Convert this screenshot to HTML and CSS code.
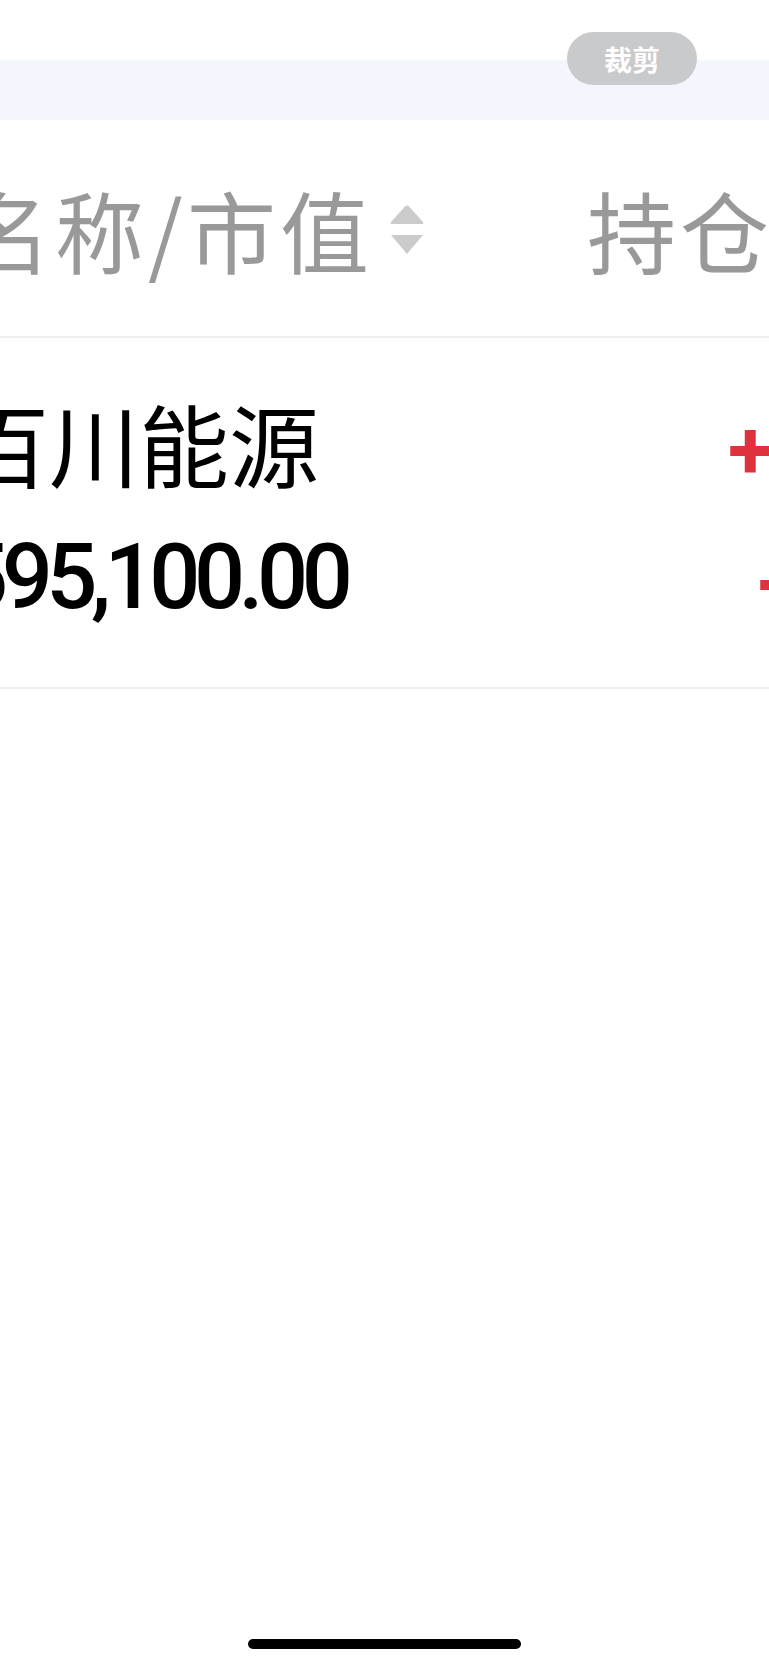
FILE: index.html
```html
<!DOCTYPE html>
<html lang="zh-CN">
<head>
<meta charset="utf-8">
<title>持仓</title>
<link rel="stylesheet" href="styles.css">
</head>
<body>
<div class="screen">
  <div class="topbar"></div>
  <div class="band"></div>
  <div class="thead">
    <div class="th th-name">
      <span class="th-text">名称/市值</span>
      <svg class="sort" width="34" height="49" viewBox="0 0 34 49" aria-hidden="true">
        <path d="M15 1.5 Q17 -0.5 19 1.5 L33 17 Q34 19 32 19 L2 19 Q0 19 1 17 Z" fill="#cbcbcb"/>
        <path d="M1 30 L33 30 L17 49 Z" fill="#cbcbcb"/>
      </svg>
    </div>
    <div class="th th-pos">持仓/可用</div>
  </div>
  <div class="row">
    <div class="cell cell-name">
      <div class="stock-name">百川能源</div>
      <div class="stock-value">595,100.00</div>
    </div>
    <div class="cell cell-pl">
      <div class="pl-top">+12,300.00</div>
      <div class="pl-bottom">+2.11%</div>
    </div>
  </div>
  <div class="crop-btn">裁剪</div>
  <div class="home-bar"></div>
</div>
</body>
</html>
```

FILE: styles.css
```css
html, body {
  margin: 0;
  padding: 0;
  background: #ffffff;
}
body {
  width: 769px;
  height: 1665px;
  overflow: hidden;
  font-family: "Noto Sans CJK SC", "Noto Sans", sans-serif;
}
.screen {
  position: relative;
  width: 769px;
  height: 1665px;
  overflow: hidden;
}
.topbar {
  height: 60px;
  background: #ffffff;
}
.band {
  height: 60px;
  background: #f3f6fd;
}
.thead {
  height: 216px;
  display: flex;
  align-items: center;
  border-bottom: 2px solid #efefef;
  margin-left: -38px;
  white-space: nowrap;
}
.th {
  display: flex;
  align-items: center;
  font-size: 89px;
  color: #999999;
  font-weight: 400;
  letter-spacing: 4px;
}
.th-name {
  width: 625px;
  flex: none;
}
.th-text {
  line-height: 1;
}
.sort {
  margin-left: 17px;
  margin-top: 2px;
  flex: none;
}
.th-pos {
  line-height: 1;
}
.row {
  height: 349px;
  display: flex;
  align-items: center;
  border-bottom: 2px solid #efefef;
  margin-left: -41px;
  white-space: nowrap;
}
.cell-name {
  width: 769px;
  flex: none;
}
.stock-name {
  font-size: 90px;
  line-height: 1;
  color: #000000;
  font-weight: 400;
  margin-top: -6px;
}
.stock-value {
  font-family: Roboto, "Liberation Sans", sans-serif;
  font-size: 90px;
  line-height: 1;
  font-weight: 500;
  color: #000000;
  margin-top: 46px;
  margin-left: -2px;
  letter-spacing: -6.5px;
}
.cell-pl {
  flex: none;
  font-family: Roboto, "Liberation Sans", sans-serif;
  font-weight: 700;
  color: #e0323e;
}
.pl-top {
  font-size: 82px;
  line-height: 1;
  margin-top: 8px;
}
.pl-bottom {
  font-size: 82px;
  line-height: 1;
  margin-top: 52px;
  padding-left: 30px;
}
.crop-btn {
  position: absolute;
  left: 567px;
  top: 32px;
  width: 130px;
  height: 53px;
  border-radius: 27px;
  background: #c9cacc;
  color: #ffffff;
  font-size: 28px;
  font-weight: 700;
  display: flex;
  align-items: center;
  justify-content: center;
}
.home-bar {
  position: absolute;
  left: 248px;
  top: 1639px;
  width: 273px;
  height: 10px;
  border-radius: 5px;
  background: #000000;
}
```
